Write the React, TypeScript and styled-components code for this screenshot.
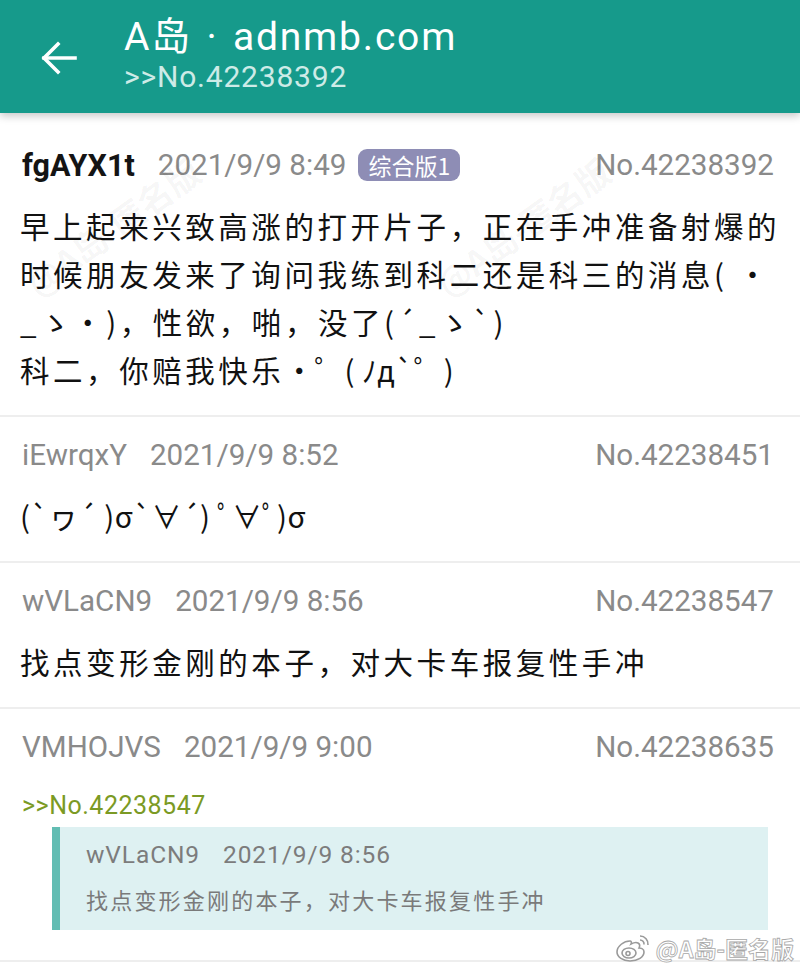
import React from "react";
import styled, { createGlobalStyle } from "styled-components";

const Global = createGlobalStyle`
  html, body { margin: 0; padding: 0; background: #ffffff; }
  body { font-family: Roboto, "Noto Sans CJK SC", sans-serif; }
  * { box-sizing: border-box; }
`;

const Page = styled.div`
  position: relative;
  width: 800px;
  height: 975px;
  overflow: hidden;
  background: #ffffff;
`;

const AppBar = styled.header`
  position: relative;
  z-index: 2;
  height: 113px;
  background: #169a8b;
  display: flex;
  align-items: center;
  padding-left: 40px;
  gap: 46px;
  box-shadow: 0 3px 8px rgba(0, 0, 0, 0.22);
`;

const BackIcon = styled.svg`
  width: 38px;
  height: 38px;
  flex: none;
  margin-top: 2px;
`;

const TitleBlock = styled.div`
  display: flex;
  flex-direction: column;
  margin-top: -4px;
`;

const Title = styled.div`
  color: #ffffff;
  font-family: Roboto, "Noto Sans CJK SC", sans-serif;
  font-size: 39px;
  line-height: 44px;
  letter-spacing: 1.8px;
  word-spacing: 3px;
`;

const Subtitle = styled.div`
  color: #cdebe7;
  font-family: Roboto, sans-serif;
  font-size: 30px;
  line-height: 36px;
  letter-spacing: 0.8px;
`;

const List = styled.main`
  display: flex;
  flex-direction: column;
`;

const Post = styled.article<{ $first?: boolean; $bottom?: number }>`
  display: flex;
  flex-direction: column;
  padding: ${(p) => (p.$first ? 32 : 18)}px 26px ${(p) => p.$bottom ?? 22}px 20px;
  border-bottom: 2px solid #eeeeee;
`;

const Meta = styled.div`
  display: flex;
  align-items: center;
  height: 40px;
  font-family: Roboto, "Noto Sans CJK SC", sans-serif;
  font-size: 29.6px;
  color: #8a8a8a;
`;

const Author = styled.span<{ $po?: boolean }>`
  color: ${(p) => (p.$po ? "#141414" : "#8a8a8a")};
  font-weight: ${(p) => (p.$po ? 700 : 400)};
  font-size: ${(p) => (p.$po ? 30.5 : 29.6)}px;
  margin-left: 2px;
`;

const Time = styled.span`
  margin-left: 23px;
`;

const Tag = styled.span`
  margin-left: 12px;
  height: 32px;
  padding: 0 10px;
  border-radius: 9px;
  background: #8e8db5;
  color: #ffffff;
  font-family: "Noto Sans CJK SC", sans-serif;
  font-size: 23px;
  line-height: 32px;
`;

const No = styled.span`
  margin-left: auto;
`;

const Body = styled.div`
  margin-top: 16px;
  font-family: "Noto Sans CJK SC", sans-serif;
  font-size: 29.5px;
  line-height: 48px;
  letter-spacing: 3.55px;
  color: #111111;
  white-space: nowrap;
`;

const Kao = styled.span`
  letter-spacing: 0.5px;
`;

const RefLink = styled.div`
  margin-top: 22px;
  font-family: Roboto, sans-serif;
  font-size: 25px;
  line-height: 34px;
  color: #7b9a24;
  letter-spacing: 0.5px;
  padding-left: 2px;
`;

const Quote = styled.blockquote`
  margin: 4px 6px 0 32px;
  padding: 12px 20px 16px 26px;
  background: #def1f2;
  border-left: 8px solid #62bdb3;
  display: flex;
  flex-direction: column;
  gap: 13px;
`;

const QuoteMeta = styled.div`
  display: flex;
  gap: 23px;
  font-family: Roboto, sans-serif;
  font-size: 24.5px;
  line-height: 32px;
  color: #7c7c7c;
  letter-spacing: 0.9px;
`;

const QuoteText = styled.div`
  font-family: "Noto Sans CJK SC", sans-serif;
  font-size: 22px;
  line-height: 30px;
  letter-spacing: 2.2px;
  color: #7a7a7a;
`;

const Faint = styled.div<{ $x: number; $y: number }>`
  position: absolute;
  left: ${(p) => p.$x}px;
  top: ${(p) => p.$y}px;
  transform: rotate(-36deg);
  transform-origin: left center;
  font-family: "Noto Sans CJK SC", sans-serif;
  font-size: 34px;
  font-weight: 700;
  color: rgba(0, 0, 0, 0.045);
  white-space: nowrap;
  pointer-events: none;
  z-index: 1;
`;

const Stamp = styled.div`
  position: absolute;
  right: 6px;
  bottom: 10px;
  display: flex;
  align-items: center;
  gap: 2px;
  z-index: 3;
`;

const StampText = styled.span`
  font-family: "Noto Sans CJK SC", sans-serif;
  font-size: 23px;
  font-weight: 700;
  color: rgba(255, 255, 255, 0.92);
  -webkit-text-stroke: 0.8px #a8a8a8;
`;

const WeiboIcon = () => (
  <svg width="40" height="32" viewBox="0 0 40 32" fill="none" stroke="#9a9a9a" strokeWidth="1.6">
    <path d="M16 9c-6 0-13 5-13 11 0 5 6 9 13 9 8 0 14-4 14-9 0-3-3-4-5-4 1-2 1-4-1-5-2-1-5 0-7 1 1-2 0-3-1-3z" fill="#fff" />
    <ellipse cx="15" cy="21" rx="7" ry="5" />
    <circle cx="14" cy="21.5" r="2" />
    <path d="M26 4a8 8 0 0 1 8 9" />
    <path d="M26 8a4 4 0 0 1 4 4.5" />
  </svg>
);

export default function App() {
  return (
    <Page>
      <Global />
      <AppBar>
        <BackIcon viewBox="0 0 38 38" fill="none" stroke="#ffffff" strokeWidth="3.6" strokeLinecap="square">
          <path d="M4 19H35" />
          <path d="M18 5L4 19L18 33" />
        </BackIcon>
        <TitleBlock>
          <Title>A岛 · adnmb.com</Title>
          <Subtitle>&gt;&gt;No.42238392</Subtitle>
        </TitleBlock>
      </AppBar>

      <Faint $x={30} $y={262}>@A岛-匿名版</Faint>
      <Faint $x={440} $y={262}>@A岛-匿名版</Faint>

      <List>
        <Post $first>
          <Meta>
            <Author $po>fgAYX1t</Author>
            <Time>2021/9/9 8:49</Time>
            <Tag>综合版1</Tag>
            <No>No.42238392</No>
          </Meta>
          <Body>
            早上起来兴致高涨的打开片子，正在手冲准备射爆的
            <br />
            时候朋友发来了询问我练到科二还是科三的消息( ・
            <br />
            _ゝ・)，性欲，啪，没了(´_ゝ`)
            <br />
            科二，你赔我快乐<Kao>·゜( ﾉд`゜)</Kao>
          </Body>
        </Post>

        <Post>
          <Meta>
            <Author>iEwrqxY</Author>
            <Time>2021/9/9 8:52</Time>
            <No>No.42238451</No>
          </Meta>
          <Body>
            <Kao>(`ヮ´ )σ`∀´) ﾟ∀ﾟ)σ</Kao>
          </Body>
        </Post>

        <Post>
          <Meta>
            <Author>wVLaCN9</Author>
            <Time>2021/9/9 8:56</Time>
            <No>No.42238547</No>
          </Meta>
          <Body>找点变形金刚的本子，对大卡车报复性手冲</Body>
        </Post>

        <Post $bottom={30}>
          <Meta>
            <Author>VMHOJVS</Author>
            <Time>2021/9/9 9:00</Time>
            <No>No.42238635</No>
          </Meta>
          <RefLink>&gt;&gt;No.42238547</RefLink>
          <Quote>
            <QuoteMeta>
              <span>wVLaCN9</span>
              <span>2021/9/9 8:56</span>
            </QuoteMeta>
            <QuoteText>找点变形金刚的本子，对大卡车报复性手冲</QuoteText>
          </Quote>
        </Post>
      </List>

      <Stamp>
        <WeiboIcon />
        <StampText>@A岛-匿名版</StampText>
      </Stamp>
    </Page>
  );
}
